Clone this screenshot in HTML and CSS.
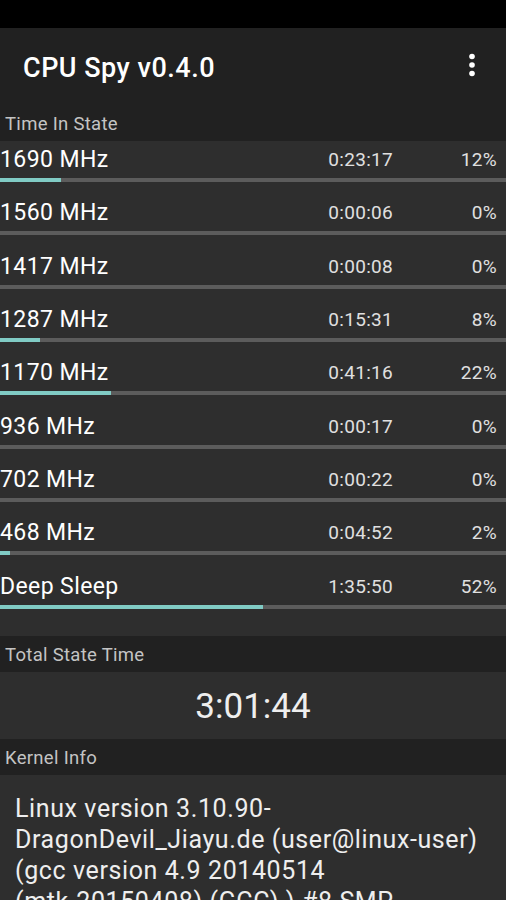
FILE: index.html
```html
<!DOCTYPE html>
<html lang="en">
  <head>
    <title>CPU Spy</title>
    <meta charset="utf-8" />
    <link rel="stylesheet" href="styles.css">
  </head>
  <body>
    <div class="statusbar"></div>
    <div class="toolbar">
      <h1>CPU Spy v0.4.0</h1>
      <svg class="menu" width="8" height="24" viewBox="0 0 8 24">
        <circle cx="4" cy="3.5" r="2.8" fill="#fff" />
        <circle cx="4" cy="12" r="2.8" fill="#fff" />
        <circle cx="4" cy="20.5" r="2.8" fill="#fff" />
      </svg>
    </div>

    <div class="header">Time In State</div>
    <ul class="states">
      <li>
        <div class="line"><span class="freq">1690 MHz</span><span class="time">0:23:17</span><span class="pct">12%</span></div>
        <div class="bar"><div class="fill" style="width: 12%"></div></div>
      </li>
      <li>
        <div class="line"><span class="freq">1560 MHz</span><span class="time">0:00:06</span><span class="pct">0%</span></div>
        <div class="bar"><div class="fill" style="width: 0%"></div></div>
      </li>
      <li>
        <div class="line"><span class="freq">1417 MHz</span><span class="time">0:00:08</span><span class="pct">0%</span></div>
        <div class="bar"><div class="fill" style="width: 0%"></div></div>
      </li>
      <li>
        <div class="line"><span class="freq">1287 MHz</span><span class="time">0:15:31</span><span class="pct">8%</span></div>
        <div class="bar"><div class="fill" style="width: 8%"></div></div>
      </li>
      <li>
        <div class="line"><span class="freq">1170 MHz</span><span class="time">0:41:16</span><span class="pct">22%</span></div>
        <div class="bar"><div class="fill" style="width: 22%"></div></div>
      </li>
      <li>
        <div class="line"><span class="freq">936 MHz</span><span class="time">0:00:17</span><span class="pct">0%</span></div>
        <div class="bar"><div class="fill" style="width: 0%"></div></div>
      </li>
      <li>
        <div class="line"><span class="freq">702 MHz</span><span class="time">0:00:22</span><span class="pct">0%</span></div>
        <div class="bar"><div class="fill" style="width: 0%"></div></div>
      </li>
      <li>
        <div class="line"><span class="freq">468 MHz</span><span class="time">0:04:52</span><span class="pct">2%</span></div>
        <div class="bar"><div class="fill" style="width: 2%"></div></div>
      </li>
      <li>
        <div class="line"><span class="freq">Deep Sleep</span><span class="time">1:35:50</span><span class="pct">52%</span></div>
        <div class="bar"><div class="fill" style="width: 52%"></div></div>
      </li>
    </ul>

    <div class="header">Total State Time</div>
    <div class="total">3:01:44</div>

    <div class="header">Kernel Info</div>
    <p class="kernel">Linux version 3.10.90-DragonDevil_Jiayu.de (user@linux-user) (gcc version 4.9 20140514 <span class="nowrap">(mtk-20150408)</span> (GCC) ) #8 SMP PREEMPT Wed Jul 8 12:27:16 CST 2015</p>
  </body>
</html>
```

FILE: styles.css
```css
html, body {
  margin: 0;
  background: #2e2e2e;
  color: #fff;
  font-family: Roboto, "Noto Sans", sans-serif;
  width: 506px;
  height: 900px;
  overflow: hidden;
}

.statusbar {
  height: 28px;
  background: #000;
}

.toolbar {
  height: 77px;
  background: #212121;
  display: flex;
  align-items: center;
  justify-content: space-between;
  padding: 0 30px 0 23px;
}

h1 {
  margin: 3px 0 0;
  font-size: 27px;
  font-weight: 500;
  letter-spacing: 0.5px;
}

.menu {
  margin-top: -4px;
}

.header {
  height: 36px;
  line-height: 39px;
  background: #212121;
  color: #c4c4c4;
  font-size: 18.5px;
  letter-spacing: 0.3px;
  padding-left: 5px;
}

.states {
  list-style: none;
  margin: 0;
  padding: 0 0 15px;
}

.states li {
  height: 53.33px;
}

.line {
  display: flex;
  align-items: center;
  height: 37px;
}

.freq {
  flex: 1;
  font-size: 23px;
  letter-spacing: 0.4px;
}

.time {
  font-size: 19px;
  letter-spacing: 0.3px;
  color: #e0e0e0;
  width: 70px;
  text-align: right;
}

.pct {
  font-size: 19px;
  letter-spacing: 0.3px;
  color: #e0e0e0;
  width: 104px;
  text-align: right;
  padding-right: 9px;
}

.bar {
  height: 4px;
  background: #5c5c5c;
}

.fill {
  height: 4px;
  background: #80cbc4;
}

.total {
  height: 67px;
  line-height: 70px;
  text-align: center;
  font-size: 35px;
  color: #eee;
}

.kernel {
  margin: 0;
  padding: 18px 15px 0;
  font-size: 25px;
  letter-spacing: 0.6px;
  line-height: 31px;
  color: #eee;
}

.nowrap {
  white-space: nowrap;
}
```
